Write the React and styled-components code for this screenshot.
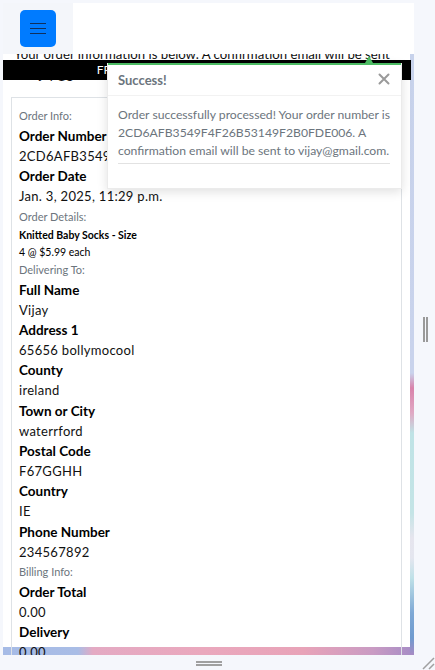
import React from "react";
import styled, { createGlobalStyle } from "styled-components";

const Global = createGlobalStyle`
  html, body { margin: 0; padding: 0; }
  body { background: #f5f7fc; font-family: Lato, "Noto Sans", sans-serif; }
  * { box-sizing: border-box; }
`;

const Screen = styled.div`
  width: 435px;
  height: 670px;
  display: flex;
  flex-direction: column;
  padding: 3px 0 0 3px;
  background: #f5f7fc;
  overflow: hidden;
`;

const MainRow = styled.div`
  display: flex;
  height: 652px;
`;

const Viewport = styled.div`
  position: relative;
  width: 411px;
  height: 652px;
  overflow: hidden;
  background:
    linear-gradient(
        to bottom,
        #c7d2eb 0px,
        #c9d3ec 370px,
        #d983ab 385px,
        #e0a9c4 410px,
        #bfe3e6 430px,
        #c4e4e6 510px,
        #e6e5ee 535px,
        #e4e6ef 555px,
        #bfe1e8 575px,
        #7ea8d5 610px,
        #6f9bcf 635px,
        #a88bc4 652px
      )
      right top / 4px 100% no-repeat,
    linear-gradient(
      to right,
      #a6bbe6 0px,
      #a9bde6 75px,
      #e4aac3 90px,
      #eaa8bd 200px,
      #e8a3b8 300px,
      #c99bc3 370px,
      #a58cc6 411px
    );
`;

const Page = styled.div`
  width: 407px;
  height: 644px;
  background: #fff;
  padding-top: 41px;
`;

const Intro = styled.p`
  margin: 0;
  padding: 0 11px;
  font-size: 13.2px;
  line-height: 20px;
  color: #111;
`;

const Card = styled.div`
  margin: 13px 8px 0 8px;
  border: 1px solid #dee2e6;
  padding: 8px 7px;
  color: #212529;
`;

const SmallLabel = styled.div`
  font-size: 11px;
  line-height: 20px;
  color: #6c757d;
`;

const FieldLabel = styled.div`
  font-size: 13.5px;
  font-weight: 700;
  line-height: 20.16px;
  color: #000;
`;

const FieldValue = styled.div`
  font-size: 13px;
  line-height: 20.16px;
  letter-spacing: 0.3px;
  color: #111;
`;

const ProductName = styled.div`
  font-size: 10.5px;
  font-weight: 700;
  line-height: 17px;
  color: #000;
`;

const ProductQty = styled.div`
  font-size: 10.5px;
  line-height: 16px;
  color: #000;
`;

const Header = styled.div`
  position: absolute;
  top: 0;
  left: 0;
  right: 0;
  height: 51px;
  background: #fff;
  display: flex;
`;

const MenuCell = styled.div`
  width: 70px;
  background: #f4f6fa;
  display: flex;
  align-items: center;
  padding-left: 17px;
`;

const MenuButton = styled.button`
  width: 36px;
  height: 37px;
  border: none;
  border-radius: 5px;
  background: #007bff;
  display: flex;
  flex-direction: column;
  align-items: center;
  justify-content: center;
  gap: 4px;
  padding: 0;
`;

const BurgerLine = styled.span`
  display: block;
  width: 16px;
  height: 1px;
  background: #10305c;
`;

const Banner = styled.div`
  position: absolute;
  top: 57px;
  left: 0;
  width: 408px;
  height: 20px;
  background: #000;
  color: #fff;
  font-size: 12px;
  line-height: 20px;
  text-align: center;
  text-transform: uppercase;
`;

const Toast = styled.div`
  position: absolute;
  left: 104px;
  top: 60px;
  width: 295px;
  background: #fff;
  border: 1px solid rgba(0, 0, 0, 0.08);
  border-top: none;
  box-shadow: 0 3px 10px rgba(0, 0, 0, 0.12);
`;

const Capper = styled.div`
  height: 2px;
  background: #4cbb63;
`;

const Arrow = styled.div`
  position: absolute;
  top: -7px;
  left: 257px;
  width: 0;
  height: 0;
  border-left: 4px solid transparent;
  border-right: 4px solid transparent;
  border-bottom: 7px solid #4cbb63;
`;

const ToastHeader = styled.div`
  height: 31px;
  display: flex;
  align-items: center;
  justify-content: space-between;
  padding: 0 10px 0 10px;
  border-bottom: 1px solid rgba(0, 0, 0, 0.05);
  font-size: 13px;
  font-weight: 700;
  color: #6c757d;
`;

const CloseButton = styled.button`
  border: none;
  background: none;
  padding: 0;
  width: 12px;
  height: 12px;
  display: flex;
  margin-top: -3px;
  margin-right: 1px;
`;

const ToastBody = styled.div`
  padding: 10px 6px 10px 10px;
  font-size: 12.2px;
  line-height: 18px;
  color: #6c757d;
`;

const Rule = styled.hr`
  margin: 3px 5px 14px 0;
  border: none;
  border-top: 1px solid #e2e2e2;
`;

const RightGutter = styled.div`
  flex: 1;
  display: flex;
  align-items: center;
  justify-content: center;
`;

const VHandle = styled.div`
  width: 5px;
  height: 25px;
  border-left: 2px solid #9a9a9a;
  border-right: 2px solid #9a9a9a;
  margin-left: 2px;
`;

const BottomRow = styled.div`
  flex: 1;
  display: flex;
`;

const BottomCenter = styled.div`
  width: 411px;
  display: flex;
  align-items: center;
  justify-content: center;
`;

const HHandle = styled.div`
  width: 26px;
  height: 5px;
  border-top: 2px solid #a0a0a0;
  border-bottom: 2px solid #a0a0a0;
  margin-top: 1px;
`;

const Corner = styled.div`
  flex: 1;
  display: flex;
  align-items: flex-end;
  justify-content: flex-end;
`;

const fields = [
  ["Full Name", "Vijay"],
  ["Address 1", "65656 bollymocool"],
  ["County", "ireland"],
  ["Town or City", "waterrford"],
  ["Postal Code", "F67GGHH"],
  ["Country", "IE"],
  ["Phone Number", "234567892"],
];

export default function App() {
  return (
    <>
      <Global />
      <Screen>
        <MainRow>
          <Viewport>
            <Page>
              <Intro>
                Your order information is below. A confirmation email will be sent to vijay@gmail.com.
              </Intro>
              <Card>
                <SmallLabel>Order Info:</SmallLabel>
                <FieldLabel>Order Number</FieldLabel>
                <FieldValue>2CD6AFB3549F4F26B53149F2B0FDE006</FieldValue>
                <FieldLabel>Order Date</FieldLabel>
                <FieldValue>Jan. 3, 2025, 11:29 p.m.</FieldValue>
                <SmallLabel>Order Details:</SmallLabel>
                <ProductName>Knitted Baby Socks - Size</ProductName>
                <ProductQty>4 @ $5.99 each</ProductQty>
                <SmallLabel>Delivering To:</SmallLabel>
                {fields.map(([k, v]) => (
                  <React.Fragment key={k}>
                    <FieldLabel>{k}</FieldLabel>
                    <FieldValue>{v}</FieldValue>
                  </React.Fragment>
                ))}
                <SmallLabel>Billing Info:</SmallLabel>
                <FieldLabel>Order Total</FieldLabel>
                <FieldValue>0.00</FieldValue>
                <FieldLabel>Delivery</FieldLabel>
                <FieldValue>0.00</FieldValue>
                <FieldLabel>Grand Total</FieldLabel>
                <FieldValue>23.96</FieldValue>
              </Card>
            </Page>
            <Header>
              <MenuCell>
                <MenuButton aria-label="Menu">
                  <BurgerLine />
                  <BurgerLine />
                  <BurgerLine />
                </MenuButton>
              </MenuCell>
            </Header>
            <Banner>Free delivery on orders over €50!</Banner>
            <Toast>
              <Arrow />
              <Capper />
              <ToastHeader>
                <span>Success!</span>
                <CloseButton aria-label="Close">
                  <svg width="12" height="12" viewBox="0 0 12 12">
                    <path d="M1.5 1.5 L10.5 10.5 M10.5 1.5 L1.5 10.5" stroke="#9a9a9a" strokeWidth="2" strokeLinecap="round" />
                  </svg>
                </CloseButton>
              </ToastHeader>
              <ToastBody>
                Order successfully processed! Your order number is 2CD6AFB3549F4F26B53149F2B0FDE006. A confirmation email will be sent to vijay@gmail.com.
                <Rule />
              </ToastBody>
            </Toast>
          </Viewport>
          <RightGutter>
            <VHandle />
          </RightGutter>
        </MainRow>
        <BottomRow>
          <BottomCenter>
            <HHandle />
          </BottomCenter>
          <Corner>
            <svg width="14" height="14" viewBox="0 0 14 14">
              <path d="M2 13 L13 2 M8 13 L13 8" stroke="#a0a0a0" strokeWidth="1.5" />
            </svg>
          </Corner>
        </BottomRow>
      </Screen>
    </>
  );
}
